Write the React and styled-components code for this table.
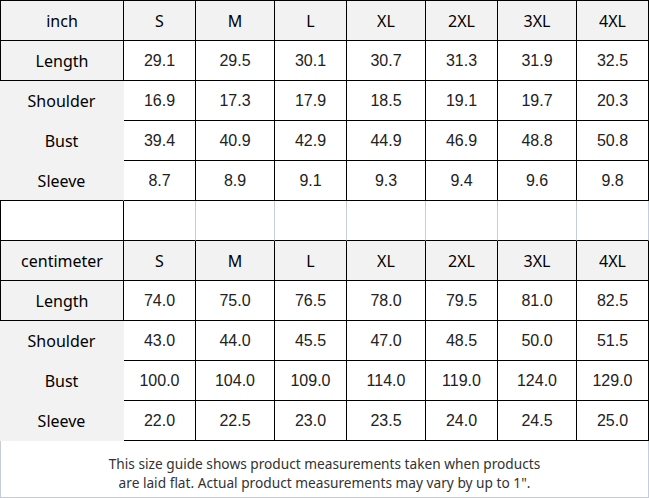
import styled, { createGlobalStyle } from 'styled-components'

const GlobalStyle = createGlobalStyle`
  html, body {
    margin: 0;
    padding: 0;
    background: #ffffff;
  }
`

const LINE = '#000000'
const SOFT = '#c5cddd'
const GREY = '#f2f2f2'

const sizes = ['S', 'M', 'L', 'XL', '2XL', '3XL', '4XL']

const inchRows = [
  { name: 'Length', values: ['29.1', '29.5', '30.1', '30.7', '31.3', '31.9', '32.5'] },
  { name: 'Shoulder', values: ['16.9', '17.3', '17.9', '18.5', '19.1', '19.7', '20.3'] },
  { name: 'Bust', values: ['39.4', '40.9', '42.9', '44.9', '46.9', '48.8', '50.8'] },
  { name: 'Sleeve', values: ['8.7', '8.9', '9.1', '9.3', '9.4', '9.6', '9.8'] },
]

const cmRows = [
  { name: 'Length', values: ['74.0', '75.0', '76.5', '78.0', '79.5', '81.0', '82.5'] },
  { name: 'Shoulder', values: ['43.0', '44.0', '45.5', '47.0', '48.5', '50.0', '51.5'] },
  { name: 'Bust', values: ['100.0', '104.0', '109.0', '114.0', '119.0', '124.0', '129.0'] },
  { name: 'Sleeve', values: ['22.0', '22.5', '23.0', '23.5', '24.0', '24.5', '25.0'] },
]

const Chart = styled.div`
  width: 649px;
  display: flex;
  flex-direction: column;
`

const Row = styled.div`
  display: grid;
  grid-template-columns: 124px 72px 79px 72px 79px 72px 79px 72px;
  height: ${(p) => (p.$first ? 41 : 40)}px;
`

const Cell = styled.div`
  box-sizing: border-box;
  display: flex;
  align-items: center;
  justify-content: center;
  background: ${(p) => (p.$grey ? GREY : '#ffffff')};
  border-right: 1px solid ${(p) => p.$right || 'transparent'};
  border-bottom: 1px solid ${(p) => p.$bottom || 'transparent'};
  border-left: ${(p) => (p.$left ? `1px solid ${p.$left}` : 'none')};
  border-top: ${(p) => (p.$top ? `1px solid ${p.$top}` : 'none')};
  font-family: ${(p) =>
    p.$label
      ? '"Noto Sans", "Liberation Sans", sans-serif'
      : '"Liberation Sans", Arial, sans-serif'};
  font-size: 16px;
  color: ${(p) => (p.$label ? '#000000' : '#222222')};
`

const Footer = styled.div`
  box-sizing: border-box;
  height: 57px;
  border: 1px solid ${SOFT};
  border-top: none;
  display: flex;
  align-items: center;
  justify-content: center;
  text-align: center;
  padding-top: 8px;
  font-family: "Noto Sans", "Liberation Sans", sans-serif;
  font-size: 13.7px;
  line-height: 19px;
  color: #333333;
`

function HeaderRow({ unit, first }) {
  return (
    <Row $first={first}>
      <Cell $label $grey $left={LINE} $top={first ? LINE : null} $right={LINE} $bottom={LINE}>
        {unit}
      </Cell>
      {sizes.map((s) => (
        <Cell key={s} $label $grey $top={first ? LINE : null} $right={LINE} $bottom={LINE}>
          {s}
        </Cell>
      ))}
    </Row>
  )
}

function MeasureRows({ rows, closed }) {
  return rows.map((row, i) => {
    const boxed = i === 0
    const last = i === rows.length - 1
    const labelBottom = boxed || (last && closed) ? LINE : null
    return (
      <Row key={row.name}>
        <Cell
          $label
          $grey
          $left={boxed ? LINE : null}
          $right={boxed ? LINE : null}
          $bottom={labelBottom}
        >
          {row.name}
        </Cell>
        {row.values.map((v, j) => (
          <Cell key={j} $right={LINE} $bottom={LINE}>
            {v}
          </Cell>
        ))}
      </Row>
    )
  })
}

function Spacer() {
  return (
    <Row>
      <Cell $left={LINE} $right={LINE} $bottom={LINE} />
      {sizes.map((s) => (
        <Cell key={s} $right={SOFT} $bottom={LINE} />
      ))}
    </Row>
  )
}

export default function App() {
  return (
    <>
      <GlobalStyle />
      <Chart>
        <HeaderRow unit="inch" first />
        <MeasureRows rows={inchRows} closed />
        <Spacer />
        <HeaderRow unit="centimeter" />
        <MeasureRows rows={cmRows} />
        <Footer>
          This size guide shows product measurements taken when products
          <br />
          are laid flat. Actual product measurements may vary by up to 1".
        </Footer>
      </Chart>
    </>
  )
}
